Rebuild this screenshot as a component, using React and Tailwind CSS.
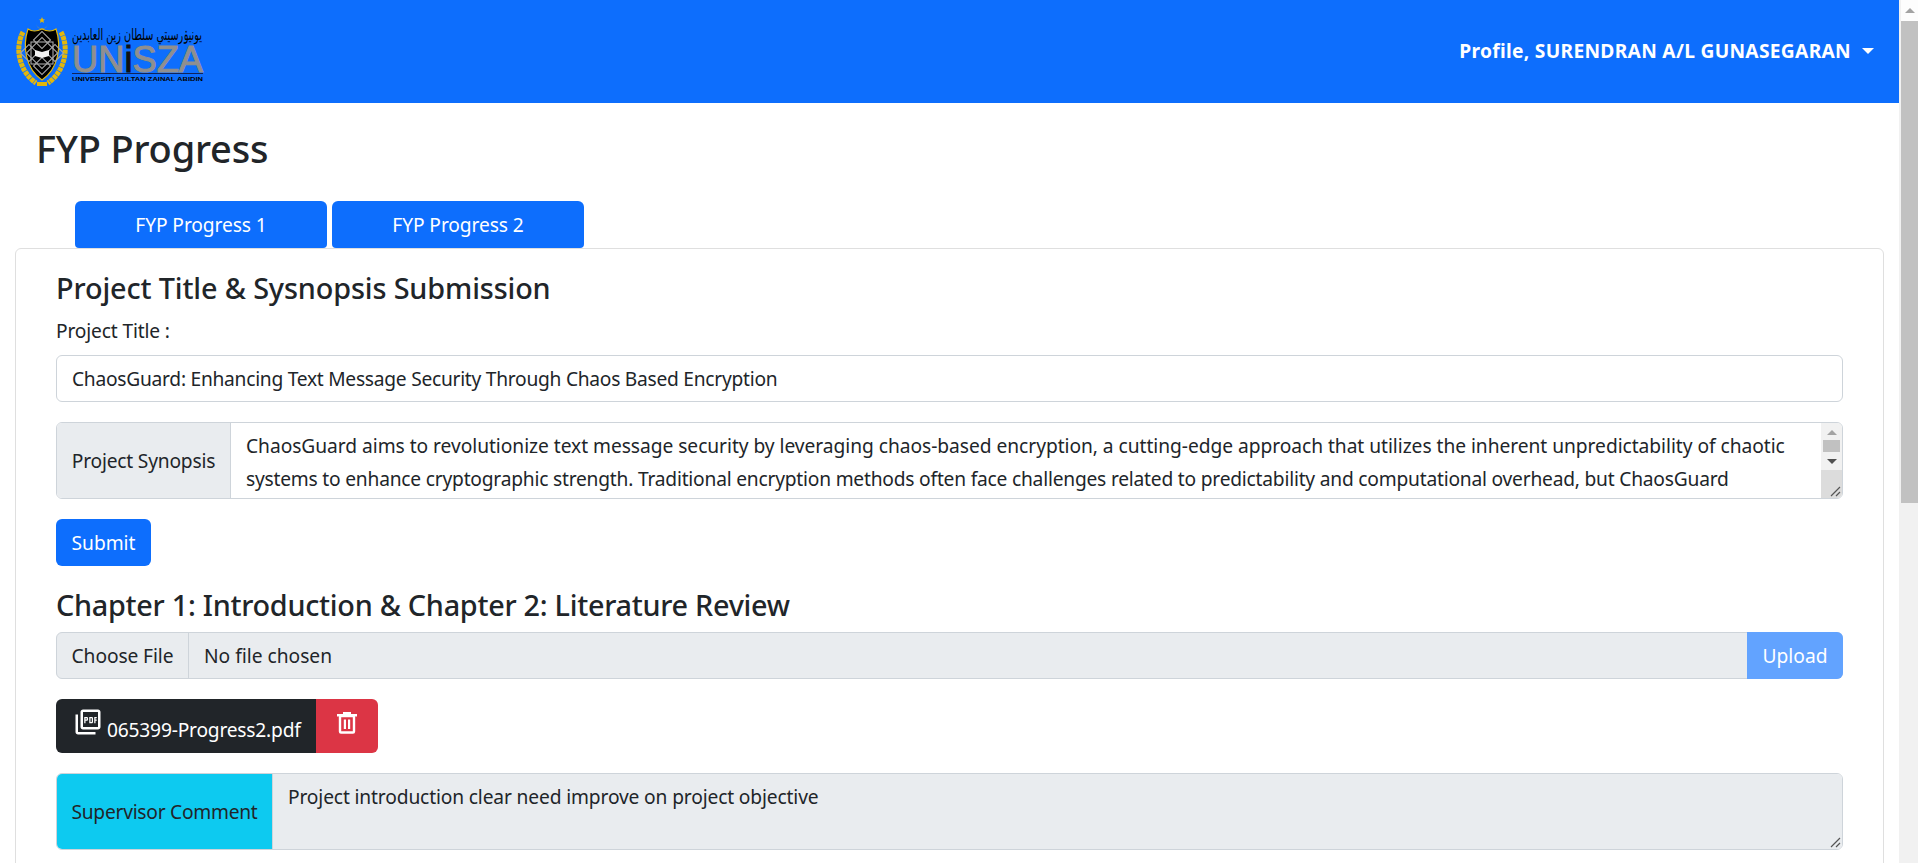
import React from "react";
import { MdOutlinePictureAsPdf } from "react-icons/md";

const Logo = () => (
  <svg width="192" height="72" viewBox="14 15 192 72">
    {/* emblem: wreath */}
    <path d="M23 31 C14 48 20 71 36 82" fill="none" stroke="#e2b70c" strokeWidth="5" strokeDasharray="4 0.6" />
    <path d="M61 31 C70 48 64 71 48 82" fill="none" stroke="#e2b70c" strokeWidth="5" strokeDasharray="4 0.6" />
    <rect x="37" y="81" width="10" height="4" fill="#e2b70c" />
    {/* shield */}
    <path d="M42 28 Q50 32 56 28 C62 46 58 68 42 79 C26 68 22 46 28 28 Q34 32 42 28 Z" fill="#000" stroke="#e2b70c" strokeWidth="1.2" />
    {/* crescent and star */}
    <path d="M36 22 A6 6 0 0 0 48 22 A5 4.6 0 0 1 36 22 Z" fill="#e2b70c" />
    <path d="M42 16 L43 18.2 L45 18.4 L43.4 19.8 L44 22 L42 20.8 L40 22 L40.6 19.8 L39 18.4 L41 18.2 Z" fill="#e2b70c" />
    {/* star ornament */}
    <g fill="none" stroke="#a8a8a8" strokeWidth="1.1">
      <rect x="31" y="41" width="22" height="22" />
      <rect x="31" y="41" width="22" height="22" transform="rotate(45 42 52)" />
      <rect x="36" y="33" width="12" height="12" transform="rotate(45 42 39)" />
      <rect x="36" y="59" width="12" height="12" transform="rotate(45 42 65)" />
      <rect x="23" y="46" width="12" height="12" transform="rotate(45 29 52)" />
      <rect x="49" y="46" width="12" height="12" transform="rotate(45 55 52)" />
    </g>
    <path d="M35 49 L42 51 L49 49 L49 55 L42 57 L35 55 Z" fill="#f2f2f2" />
    {/* wordmark */}
    <text x="72" y="39" textLength="130" lengthAdjust="spacingAndGlyphs" fontFamily="'DejaVu Sans', sans-serif" fontSize="16" fill="#000">يونيۏرسيتي سلطان زين العابدين</text>
    <text x="72" y="71" textLength="131" lengthAdjust="spacingAndGlyphs" fontFamily="'Liberation Sans', sans-serif" fontSize="36" fill="#8f8f8f" stroke="#8f8f8f" strokeWidth="1">UN<tspan fill="#111" stroke="#111">i</tspan>SZA</text>
    <rect x="72" y="72" width="131" height="1" fill="#10235a" />
    <text x="72" y="79.5" textLength="131" lengthAdjust="spacingAndGlyphs" fontFamily="'Liberation Sans', sans-serif" fontSize="6" fontWeight="700" fill="#000">UNIVERSITI SULTAN ZAINAL ABIDIN</text>
  </svg>
);

const TrashIcon = () => (
  <svg width="20" height="22" viewBox="0 0 20 22" className="-mt-[6px]">
    <rect x="6" y="0" width="8" height="2.5" fill="#fff" />
    <rect x="0" y="2" width="20" height="2.5" fill="#fff" />
    <rect x="3" y="4" width="14" height="16.5" rx="1" fill="none" stroke="#fff" strokeWidth="2.4" />
    <rect x="6.8" y="7.5" width="2.2" height="9.5" fill="#fff" />
    <rect x="11" y="7.5" width="2.2" height="9.5" fill="#fff" />
  </svg>
);

const ResizeGrip = () => (
  <svg width="11" height="11" viewBox="0 0 11 11">
    <path d="M1 10 L10 1 M6 10 L10 6" stroke="#555" strokeWidth="1.2" />
  </svg>
);

const FakeScrollbar = () => (
  <div className="w-[19px] shrink-0 h-full bg-[#f1f1f1] pl-[2px]">
    <div className="w-[17px] h-[21px] bg-[#fdfdfd] flex items-center justify-center">
      <div className="w-0 h-0 border-x-[5px] border-x-transparent border-b-[5px] border-b-[#a3a3a3]" />
    </div>
    <div className="w-[17px] h-[482px] bg-[#c1c1c1]" />
  </div>
);

const App = () => {
  return (
    <div className="h-[863px] w-[1918px] flex overflow-hidden bg-white text-[#212529] font-['Noto_Sans','Open_Sans',sans-serif]">
      <div className="w-[1899px] shrink-0">
        {/* Navbar */}
        <nav className="h-[103px] bg-[#0d6efd] flex items-center justify-between pl-[14px] pr-[25px]">
          <Logo />
          <div className="flex items-center gap-[11px] text-white text-[19.2px] font-bold tracking-[0.3px] mb-[1px]">
            <span>Profile, SURENDRAN A/L GUNASEGARAN</span>
            <div className="w-0 h-0 border-x-[6px] border-x-transparent border-t-[6px] border-t-white" />
          </div>
        </nav>

        <h1 className="text-[38px] leading-[46px] font-medium pl-[36px] pt-[22px] tracking-[-0.2px]">FYP Progress</h1>

        {/* Tabs */}
        <div className="flex gap-[5px] pl-[75px] mt-[30px]">
          <button className="w-[252px] h-[47px] pt-[1px] bg-[#0d6efd] text-white text-[19.2px] tracking-[-0.1px] rounded-t-[6px] rounded-b-[4px]">FYP Progress 1</button>
          <button className="w-[252px] h-[47px] pt-[1px] bg-[#0d6efd] text-white text-[19.2px] tracking-[-0.1px] rounded-t-[6px] rounded-b-[4px]">FYP Progress 2</button>
        </div>

        {/* Card */}
        <div className="ml-[15px] w-[1869px] border border-[#dfdfdf] rounded-[6px] px-[40px] pt-[16px] pb-[40px]">
          <h4 className="text-[28.8px] leading-[46px] font-medium tracking-[-0.13px]">Project Title &amp; Sysnopsis Submission</h4>
          <label className="block text-[19.2px] leading-[29px] mt-[5px] tracking-[-0.15px]">Project Title :</label>
          <div className="h-[47px] mt-[10px] pt-[2px] border border-[#ced4da] rounded-[6px] px-[15px] flex items-center text-[19.2px] tracking-[-0.26px]">
            ChaosGuard: Enhancing Text Message Security Through Chaos Based Encryption
          </div>

          {/* Synopsis */}
          <div className="flex h-[77px] mt-[20px] border border-[#ced4da] rounded-[6px] overflow-hidden text-[19.2px]">
            <div className="w-[174px] pt-[2px] bg-[#e9ecef] border-r border-[#ced4da] flex items-center justify-center shrink-0 tracking-[-0.2px]">Project Synopsis</div>
            <div className="flex-1 px-[15px] pt-[6px] leading-[33px] overflow-hidden whitespace-nowrap">
              <div className="tracking-[-0.04px]">ChaosGuard aims to revolutionize text message security by leveraging chaos-based encryption, a cutting-edge approach that utilizes the inherent unpredictability of chaotic</div>
              <div className="tracking-[-0.21px]">systems to enhance cryptographic strength. Traditional encryption methods often face challenges related to predictability and computational overhead, but ChaosGuard</div>
            </div>
            <div className="w-[21px] shrink-0 bg-[#f1f1f1] flex flex-col items-center pt-[7px]">
              <div className="w-0 h-0 border-x-[5px] border-x-transparent border-b-[5px] border-b-[#a3a3a3]" />
              <div className="w-[17px] h-[12px] bg-[#c1c1c1] mt-[5px]" />
              <div className="w-0 h-0 border-x-[5px] border-x-transparent border-t-[5px] border-t-[#505050] mt-[7px]" />
              <div className="w-full flex-1 bg-[#dcdcdc] mt-[6px] flex items-end justify-end pr-[1px] pb-[1px]">
                <ResizeGrip />
              </div>
            </div>
          </div>

          <button className="block w-[95px] h-[47px] pt-[2px] mt-[20px] bg-[#0d6efd] text-white text-[19.2px] rounded-[6px]">Submit</button>

          <h4 className="text-[28.8px] leading-[46px] font-medium mt-[16px] tracking-[-0.27px]">Chapter 1: Introduction &amp; Chapter 2: Literature Review</h4>

          {/* File input */}
          <div className="flex h-[47px] mt-[4px] text-[19.2px] rounded-[6px] border border-[#ced4da] bg-[#e9ecef]">
            <div className="w-[132px] pt-[2px] shrink-0 flex items-center justify-center border-r border-[#ced4da] tracking-[-0.1px]">Choose File</div>
            <div className="flex-1 px-[15px] pt-[2px] flex items-center">No file chosen</div>
            <div className="w-[96px] pt-[2px] shrink-0 bg-[#62a3ff] text-white flex items-center justify-center -my-px -mr-px rounded-r-[6px]">Upload</div>
          </div>

          {/* Uploaded file */}
          <div className="flex w-[322px] h-[54px] mt-[20px] rounded-[6px] overflow-hidden text-white text-[19.2px]">
            <div className="w-[260px] bg-[#212529] flex items-center pl-[17px]">
              <MdOutlinePictureAsPdf className="text-[30px] -mt-[8px] mr-[4px] shrink-0" />
              <span className="pt-[8px] tracking-[-0.2px]">065399-Progress2.pdf</span>
            </div>
            <div className="w-[62px] bg-[#dc3545] flex items-center justify-center">
              <TrashIcon />
            </div>
          </div>

          {/* Supervisor comment */}
          <div className="flex h-[77px] mt-[20px] border border-[#ced4da] rounded-[6px] overflow-hidden text-[19.2px]">
            <div className="w-[216px] pt-[2px] shrink-0 bg-[#0dcaf0] border-r border-[#ced4da] flex items-center justify-center tracking-[-0.25px]">Supervisor Comment</div>
            <div className="flex-1 bg-[#e9ecef] px-[15px] pt-[9px] relative tracking-[-0.14px]">
              <span>Project introduction clear need improve on project objective</span>
              <div className="absolute right-[1px] bottom-[1px] flex">
                <ResizeGrip />
              </div>
            </div>
          </div>
        </div>
      </div>
      <FakeScrollbar />
    </div>
  );
};

export default App;
